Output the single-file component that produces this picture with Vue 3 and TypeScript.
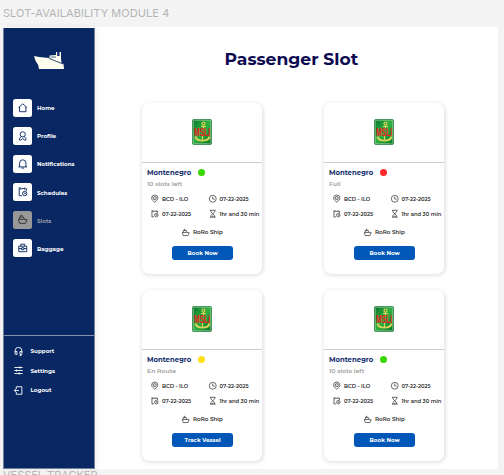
<script setup lang="ts">
interface Trip {
  id: number
  status: string
  tone: 'green' | 'red' | 'yellow'
  action: string
}

const trips: Trip[] = [
  { id: 1, status: '10 slots left', tone: 'green', action: 'Book Now' },
  { id: 2, status: 'Full', tone: 'red', action: 'Book Now' },
  { id: 3, status: 'En Route', tone: 'yellow', action: 'Track Vessel' },
  { id: 4, status: '10 slots left', tone: 'green', action: 'Book Now' },
]

const paths: Record<string, string> = {
  home: 'M1 12 12 2l11 10M4 10v12h16V10',
  profile: 'M12 2a6.500 6.500 0 1 0 0 13a6.500 6.500 0 0 0 0-13M8 14l-4 5v4h3l5-4 5 4h3v-4l-4-5',
  bell: 'M1 20h22M4 20V10a8 8 0 0 1 16 0v10M9 23h6',
  calendar: 'M10 22H3V4h3M9 4h7M19 4h2v6M3 1v3M7 1v6M17 1v6M17 11a5.500 5.500 0 1 0 0 11a5.500 5.500 0 0 0 0-11M17 14v3h3',
  ship: 'M4 21 1 11h13l9 1-4 9zM4 11V5h10l2 6M7 5V1h4',
  bag: 'M2 8h20v14H2zM7 8V3h10v5M2 14h7M15 14h7M9 12h6v5H9z',
  support: 'M3 14V10a9 9 0 0 1 18 0v4M3 12h5v8H5a2 2 0 0 1-2-2v-6M21 12h-5v8h3a2 2 0 0 0 2-2v-6M19 20v3h-4',
  settings: 'M1 4h22M1 12h22M1 20h22M16 1v6M7 9v6M14 17v6',
  logout: 'M6 8V2h15v20H6v-6M13 12H1M5 8l-4 4 4 4',
  pin: 'M12 23C7 19 2 15 2 10a10 10 0 0 1 20 0c0 5-5 9-10 13M12 5a5 5 0 1 0 0 10a5 5 0 0 0 0-10M12 9v2',
  clock: 'M12 1a11 11 0 1 0 0 22a11 11 0 0 0 0-22M12 5v8h6',
  hourglass: 'M3 1h18M3 23h18M6 1v5l12 12v5M18 1v5L6 18v5M9 20h6',
}

const menu = [
  { label: 'Home', icon: 'home' },
  { label: 'Profile', icon: 'profile' },
  { label: 'Notifications', icon: 'bell' },
  { label: 'Schedules', icon: 'calendar' },
  { label: 'Slots', icon: 'ship', active: true },
  { label: 'Baggage', icon: 'bag' },
]

const footer = [
  { label: 'Support', icon: 'support' },
  { label: 'Settings', icon: 'settings' },
  { label: 'Logout', icon: 'logout' },
]

const facts = [
  { icon: 'pin', text: 'BCD - ILO' },
  { icon: 'clock', text: '07-22-2025' },
  { icon: 'calendar', text: '07-22-2025' },
  { icon: 'hourglass', text: '1hr and 30 min' },
]
</script>

<template>
  <div class="canvas">
    <div class="frame-label">SLOT-AVAILABILITY MODULE 4</div>
    <div class="frame">
      <aside class="sidebar">
        <svg class="brand" viewBox="0 0 30 19">
          <path d="M0 5 5 6l10 1 14.500 6 .5 5H5l-.8-4Q1 10 0 5Z" />
          <path d="M15.500 7V4.500L22 4V1h1.200v4h2.300V1h1.500v6l.5 5L20 9Z" />
          <path class="cut" d="M15 7.500 29 13M16.500 6H22" />
        </svg>
        <nav class="menu">
          <a v-for="m in menu" :key="m.label" class="menu-item" :class="{ active: m.active }">
            <span class="tile"><svg class="icon" viewBox="0 0 24 24"><path :d="paths[m.icon]" /></svg></span>
            <span>{{ m.label }}</span>
          </a>
        </nav>
        <nav class="foot">
          <a v-for="f in footer" :key="f.label" class="foot-item">
            <svg class="icon" viewBox="0 0 24 24"><path :d="paths[f.icon]" /></svg>
            <span>{{ f.label }}</span>
          </a>
        </nav>
      </aside>
      <main class="content">
        <h1>Passenger Slot</h1>
        <div class="grid">
          <article v-for="t in trips" :key="t.id" class="card">
            <div class="cover">
              <svg class="logo" viewBox="0 0 20 26">
                <defs>
                  <linearGradient id="sheen" x1="0" y1="0" x2="1" y2="1">
                    <stop offset="0" stop-color="#08752b" />
                    <stop offset=".5" stop-color="#2fb142" />
                    <stop offset="1" stop-color="#087022" />
                  </linearGradient>
                </defs>
                <rect x=".5" y=".5" width="19" height="25" rx="1.3" fill="url(#sheen)" stroke="#3a8e51" />
                <rect x="1.3" y="1.3" width="17.4" height="23.4" rx="1" fill="none" stroke="#a7d9ae" stroke-width=".6" />
                <g fill="none" stroke="#d8d45a" stroke-width="1.2">
                  <circle cx="11.500" cy="4.500" r="1.500" />
                  <path d="M11.500 6v3M9 7.500h5M10.500 17v4.500" />
                  <path d="M3.500 17.500c1 5.500 13 5.500 14 0" stroke-width="1.900" />
                </g>
                <text transform="translate(2 16.500) scale(1 1.600)">MSLI</text>
              </svg>
            </div>
            <div class="body">
              <div class="name"><span>Montenegro</span><i class="dot" :class="t.tone"></i></div>
              <div class="status">{{ t.status }}</div>
              <div class="facts">
                <div v-for="(f, i) in facts" :key="i" class="fact">
                  <svg class="icon" viewBox="0 0 24 24"><path :d="paths[f.icon]" /></svg>
                  <span>{{ f.text }}</span>
                </div>
              </div>
              <div class="fact vessel">
                <svg class="icon" viewBox="0 0 24 24"><path :d="paths.ship" /></svg>
                <span>RoRo Ship</span>
              </div>
              <button type="button">{{ t.action }}</button>
            </div>
          </article>
        </div>
      </main>
    </div>
    <div class="frame-label next">VESSEL TRACKER</div>
  </div>
</template>

<style>
body {
  overflow: hidden;
}
</style>

<style scoped>
.canvas {
  box-sizing: border-box;
  width: 504px;
  height: 475px;
  overflow: hidden;
  padding-left: 3px;
  background: #f4f4f4;
  font-family: Montserrat, Inter, sans-serif;
}
.frame-label {
  height: 27px;
  font: 400 11px/27px Inter, sans-serif;
  letter-spacing: 0.060px;
  color: #b5b5b5;
  white-space: nowrap;
}
.frame-label.next {
  height: 6px;
  line-height: 13px;
  letter-spacing: -0.020px;
}
.frame {
  display: flex;
  width: 494.700px;
  height: 442px;
  background: #fff;
}
.sidebar {
  box-sizing: border-box;
  display: flex;
  flex-direction: column;
  width: 92px;
  height: 441px;
  margin-top: 1px;
  border: 1px solid #71809f;
  border-top-width: 0;
  background: #092863;
  box-shadow: 2px 0 6px rgba(0, 0, 0, 0.06);
  color: #fff;
  font-size: 5.600px;
  font-weight: 700;
}
.brand {
  width: 30px;
  height: 19px;
  margin: 23px 0 0 30px;
  fill: #fffff0;
}
.brand .cut {
  fill: none;
  stroke: #092863;
  stroke-width: 0.700;
}
.icon {
  display: block;
  flex: none;
  width: 8px;
  height: 8px;
  fill: none;
  stroke: currentColor;
  stroke-width: 2;
  overflow: visible;
}
.menu {
  display: flex;
  flex-direction: column;
  gap: 9.600px;
  margin: 28.500px 0 0 9px;
}
.menu-item {
  display: flex;
  align-items: center;
  gap: 5.500px;
  height: 18.500px;
}
.menu-item > span:last-child {
  padding-top: 1px;
}
.tile {
  display: grid;
  place-items: center;
  width: 18.500px;
  height: 18.500px;
  border-radius: 2.500px;
  background: #fff;
  color: #092863;
}
.tile .icon {
  width: 9.500px;
  height: 9.500px;
  stroke-width: 2.300;
}
.active {
  color: #989da6;
}
.active .tile {
  background: #989898;
  color: #303030;
}
.foot {
  box-sizing: border-box;
  display: flex;
  flex: none;
  flex-direction: column;
  gap: 9.500px;
  margin-top: auto;
  height: 133px;
  padding: 10px 0 0 10px;
  border-top: 1px solid #8491ac;
}
.foot-item {
  display: flex;
  align-items: center;
  gap: 7.500px;
  height: 10px;
}
.foot-item .icon {
  width: 9px;
  height: 9px;
  stroke-width: 2.400;
}
.content {
  flex: 1;
}
h1 {
  margin: 19px 0 0;
  padding-right: 10px;
  text-align: center;
  font-size: 17.150px;
  line-height: 26px;
  font-weight: 700;
  color: #0c0a50;
}
.grid {
  display: grid;
  grid-template-columns: 120px 120px;
  grid-auto-rows: 171.700px;
  column-gap: 62px;
  row-gap: 15.300px;
  margin: 30.600px 0 0 47px;
}
.card {
  box-sizing: border-box;
  display: flex;
  flex-direction: column;
  border-radius: 7px;
  background: #fff;
  box-shadow: 0.500px 1px 4px rgba(0, 0, 0, 0.15);
}
.cover {
  box-sizing: border-box;
  display: grid;
  place-items: center;
  height: 60px;
  border-bottom: 1px solid #cbcfd2;
}
.logo {
  width: 20px;
  height: 26px;
}
.logo text {
  font: 700 6.800px "Liberation Sans", sans-serif;
  fill: #f01c24;
}
.body {
  display: flex;
  flex-direction: column;
  padding: 4.300px 0 0 5px;
}
.name {
  display: flex;
  align-items: center;
  gap: 6.500px;
  height: 11px;
  font-size: 6.850px;
  font-weight: 700;
  color: #112d6b;
}
.dot {
  width: 7px;
  height: 7px;
  border-radius: 50%;
}
.green {
  background: #38d600;
}
.red {
  background: #ff2929;
}
.yellow {
  background: #ffe017;
}
.status {
  height: 11px;
  font-size: 6.200px;
  line-height: 12px;
  font-weight: 600;
  color: #9b9b9b;
}
.facts {
  display: grid;
  grid-template-columns: 57.500px 1fr;
  grid-auto-rows: 15px;
  margin: 2.400px 0 0 4px;
}
.fact {
  display: flex;
  align-items: center;
  gap: 3.500px;
  font-size: 5.250px;
  font-weight: 600;
  color: #292929;
  white-space: nowrap;
}
.fact .icon {
  width: 7.500px;
  height: 7.500px;
  stroke-width: 2.200;
}
.vessel {
  height: 15px;
  margin: 3.500px 0 0 35px;
  font-size: 5.600px;
}
button {
  width: 60.500px;
  height: 13.800px;
  margin: 6.500px 0 0 25.400px;
  padding: 0;
  border: 0;
  border-radius: 3px;
  background: #0057b8;
  color: #fff;
  font: 700 5.600px Montserrat, Inter, sans-serif;
}
</style>
